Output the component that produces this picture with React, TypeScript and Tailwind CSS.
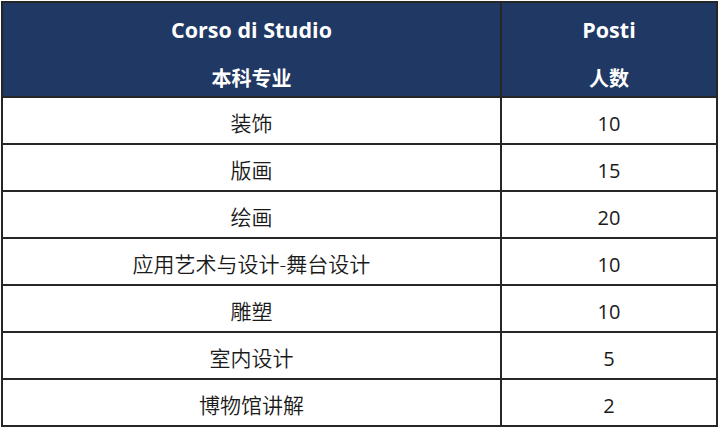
const rows: [string, string][] = [
  ["装饰", "10"],
  ["版画", "15"],
  ["绘画", "20"],
  ["应用艺术与设计-舞台设计", "10"],
  ["雕塑", "10"],
  ["室内设计", "5"],
  ["博物馆讲解", "2"],
]

const font = { fontFamily: '"Open Sans", "Noto Sans CJK SC", sans-serif' }

export default function App() {
  return (
    <div className="w-[720px] h-[428px] bg-white pt-[1px] pl-[1px]" style={font}>
      <div className="w-[717px] border-2 border-[#262626]">
        {/* header */}
        <div className="grid grid-cols-[499px_1fr] bg-[#1f3864] text-white font-bold h-[93px]">
          <div className="flex flex-col items-center border-r-2 border-[#262626] pt-[13px]">
            <span className="leading-[28px] text-[21.5px]">Corso di Studio</span>
            <span className="leading-[28px] text-[20px] mt-[21px]">本科专业</span>
          </div>
          <div className="flex flex-col items-center pt-[13px]">
            <span className="leading-[28px] text-[21.5px]">Posti</span>
            <span className="leading-[28px] text-[20px] mt-[21px]">人数</span>
          </div>
        </div>
        {/* body */}
        {rows.map(([name, n], i) => (
          <div
            key={i}
            className="grid grid-cols-[499px_1fr] h-[47px] border-t-2 border-[#262626] text-[#1a1a1a]"
          >
            <div className="flex items-center justify-center border-r-2 border-[#262626] pt-[6px] text-[21px] font-[350]">
              {name}
            </div>
            <div className="flex items-center justify-center pt-[6px] text-[20px]">{n}</div>
          </div>
        ))}
      </div>
    </div>
  )
}
